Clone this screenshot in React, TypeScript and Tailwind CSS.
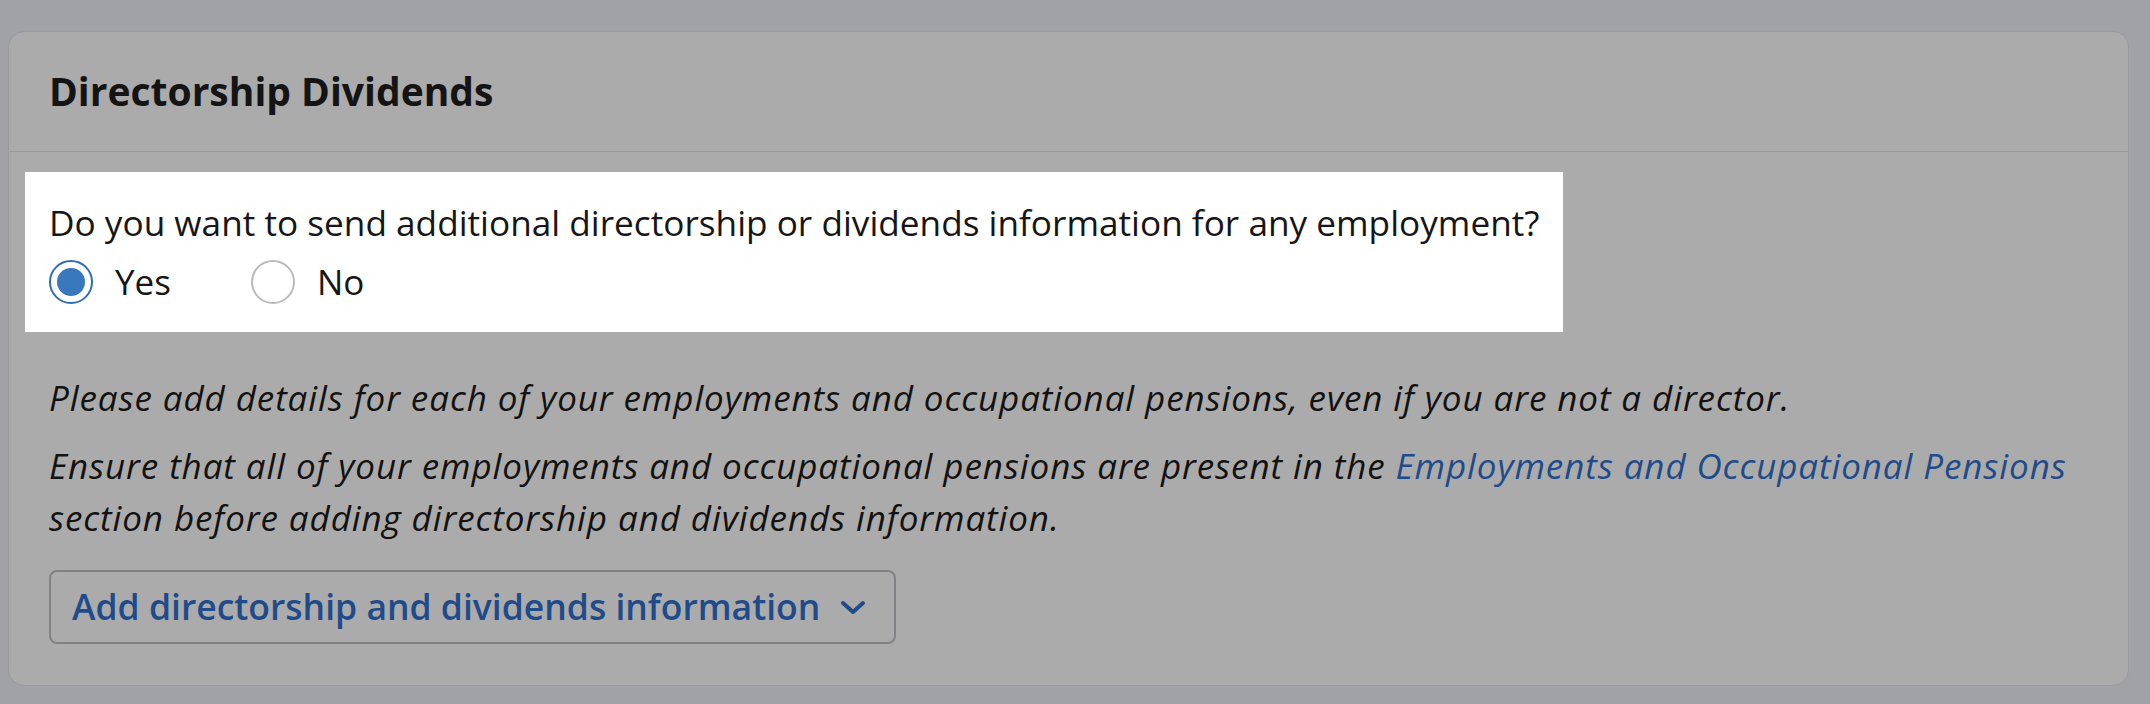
import * as React from 'react';
import { useState } from 'react';

const FONT = "font-['Open_Sans','Noto_Sans',sans-serif]";

// Single radio option with a filled dot when checked
const Radio = ({ label, checked, onSelect }: { label: string; checked: boolean; onSelect: () => void }) => (
  <label className="flex items-center gap-[22px] cursor-pointer" onClick={onSelect}>
    <span
      className={`flex h-[44px] w-[44px] items-center justify-center rounded-full border-2 bg-white ${
        checked ? 'border-[#2f6db5]' : 'border-[#b9bbbe]'
      }`}
    >
      {checked && <span className="h-[28px] w-[28px] rounded-full bg-[#3a78be]" />}
    </span>
    <span className="text-[35px] leading-[44px] text-[#161616]">{label}</span>
  </label>
);

const Chevron = () => (
  <svg width="26" height="15" viewBox="0 0 26 15" fill="none">
    <path d="M3 3 L13 12 L23 3" stroke="#1f4b8a" strokeWidth="4" strokeLinecap="round" strokeLinejoin="round" />
  </svg>
);

export default function App() {
  const [answer, setAnswer] = useState<'yes' | 'no'>('yes');

  return (
    <div className={`min-h-[704px] bg-[#a0a2a7] pl-[8px] pr-[21px] pt-[31px] ${FONT}`}>
      <div className="rounded-[16px] border border-[#98999c] bg-[#ababab]">
        {/* Section header */}
        <div className="flex h-[120px] items-center border-b border-[#98999c] px-[40px]">
          <h2 className="text-[39px] font-bold text-[#141414]">Directorship Dividends</h2>
        </div>

        <div className="px-[40px] pb-[41px] pt-[20px]">
          {/* Question */}
          <div className="-mx-[24px] w-fit bg-white px-[24px] pb-[28px] pt-[28px]">
            <p className="text-[35.2px] leading-[44px] text-[#161616]">
              Do you want to send additional directorship or dividends information for any employment?
            </p>
            <div className="mt-[16px] flex items-center gap-[80px]">
              <Radio label="Yes" checked={answer === 'yes'} onSelect={() => setAnswer('yes')} />
              <Radio label="No" checked={answer === 'no'} onSelect={() => setAnswer('no')} />
            </div>
          </div>

          {/* Guidance */}
          <p className="mt-[40px] text-[35px] italic leading-[52px] tracking-[0.9px] text-[#121212]">
            Please add details for each of your employments and occupational pensions, even if you are not a director.
          </p>
          <p className="mt-[16px] text-[35px] italic leading-[52px] tracking-[0.9px] text-[#121212]">
            Ensure that all of your employments and occupational pensions are present in the{' '}
            <a className="text-[#1f4b8a]">Employments and Occupational Pensions</a>
            <br />
            section before adding directorship and dividends information.
          </p>

          <button className="mt-[26px] flex h-[74px] items-center gap-[20px] rounded-[8px] border-2 border-[#808285] pl-[21px] pr-[28px]">
            <span className="text-[35.5px] font-semibold text-[#1f4b8a]">Add directorship and dividends information</span>
            <Chevron />
          </button>
        </div>
      </div>
    </div>
  );
}
